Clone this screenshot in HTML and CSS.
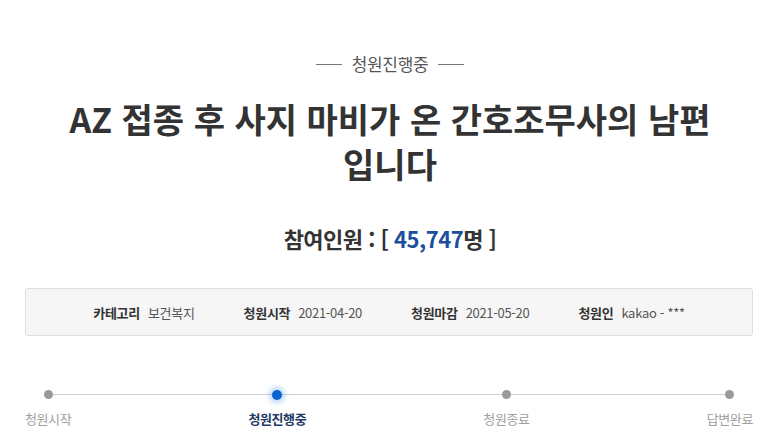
FILE: index.html
```html
<!DOCTYPE html>
<html lang="ko">
<head>
<meta charset="utf-8">
<title>청원진행중</title>
<link rel="stylesheet" href="styles.css">
</head>
<body>
<main class="page">
  <div class="status"><span class="status-line"></span><span class="status-text">청원진행중</span><span class="status-line"></span></div>
  <h1 class="title">AZ 접종 후 사지 마비가 온 간호조무사의 남편 입니다</h1>
  <p class="count">참여인원 : [ <span class="count-num">45,747</span>명 ]</p>
  <div class="info">
    <div class="info-item"><span class="info-label">카테고리</span><span class="info-value">보건복지</span></div>
    <div class="info-item"><span class="info-label">청원시작</span><span class="info-value">2021-04-20</span></div>
    <div class="info-item"><span class="info-label">청원마감</span><span class="info-value">2021-05-20</span></div>
    <div class="info-item"><span class="info-label">청원인</span><span class="info-value">kakao - ***</span></div>
  </div>
  <div class="steps">
    <div class="steps-track"></div>
    <div class="step"><span class="dot"></span><span class="step-label">청원시작</span></div>
    <div class="step step-active"><span class="dot"></span><span class="step-label">청원진행중</span></div>
    <div class="step"><span class="dot"></span><span class="step-label">청원종료</span></div>
    <div class="step"><span class="dot"></span><span class="step-label">답변완료</span></div>
  </div>
</main>
</body>
</html>
```
FILE: styles.css
```css
html, body {
  margin: 0;
  padding: 0;
  background: #fff;
}
body {
  font-family: "Noto Sans CJK KR", "Noto Sans", sans-serif;
  color: #333;
}
.page {
  padding-top: 52px;
}
.status {
  display: flex;
  justify-content: center;
  align-items: center;
  gap: 10px;
  height: 24px;
}
.status-line {
  width: 26px;
  height: 1px;
  background: #777;
}
.status-text {
  font-size: 17px;
  line-height: 24px;
  color: #555;
  letter-spacing: -0.3px;
}
.title {
  margin: 20px auto 0;
  max-width: 700px;
  text-align: center;
  font-size: 34px;
  line-height: 45px;
  font-weight: 700;
  color: #333;
  letter-spacing: 0;
  word-break: keep-all;
}
.count {
  margin: 37px 0 0;
  text-align: center;
  font-size: 22px;
  line-height: 30px;
  font-weight: 700;
  color: #333;
  letter-spacing: -0.5px;
}
.count-num {
  color: #1c4f9c;
}
.info {
  margin: 35px 27px 0 25px;
  height: 46px;
  border: 1px solid #dedede;
  border-radius: 3px;
  background: #f6f6f6;
  display: flex;
  justify-content: center;
  align-items: center;
  gap: 49px;
  font-size: 13px;
  letter-spacing: -0.3px;
}
.info-item {
  display: flex;
  gap: 8px;
}
.info-label {
  font-weight: 700;
  color: #333;
}
.info-value {
  color: #555;
}
.steps {
  position: relative;
  margin: 54px 27px 0 25px;
  display: flex;
  justify-content: space-between;
}
.steps-track {
  position: absolute;
  left: 23px;
  right: 24px;
  top: 4px;
  height: 1px;
  background: #d0d0d0;
}
.step {
  position: relative;
  display: flex;
  flex-direction: column;
  align-items: center;
  gap: 11px;
}
.dot {
  width: 9px;
  height: 9px;
  border-radius: 50%;
  background: #9a9a9a;
}
.step-active .dot {
  width: 10px;
  height: 10px;
  margin-top: -0.5px;
  margin-bottom: -0.5px;
  background: #0a63d0;
  box-shadow: 0 0 5px 3px rgba(40, 130, 240, 0.3);
}
.step-label {
  font-size: 13px;
  line-height: 18px;
  color: #a0a0a0;
  letter-spacing: -0.4px;
}
.step-active .step-label {
  font-weight: 700;
  color: #1f3a66;
}
```
